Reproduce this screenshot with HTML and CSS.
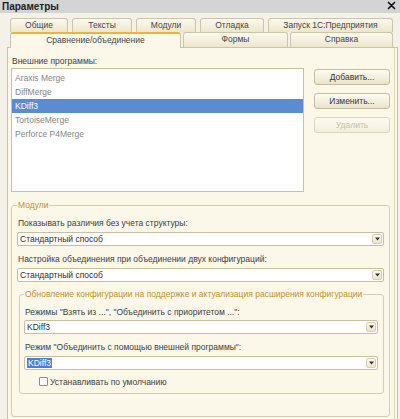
FILE: index.html
```html
<!DOCTYPE html>
<html lang="ru">
<head>
<meta charset="utf-8">
<title>Параметры</title>
<link rel="stylesheet" href="styles.css">
</head>
<body>
<div class="window">
  <div class="titlebar">
    <span class="title">Параметры</span>
    <svg class="close" width="9" height="9" viewBox="0 0 9 9"><path d="M1.5 1.5 L7.5 7.5 M7.5 1.5 L1.5 7.5" stroke="#111" stroke-width="1.7" stroke-linecap="round"/></svg>
  </div>
  <div class="tabs">
    <div class="tabrow back">
      <div class="tab t-common">Общие</div>
      <div class="tab t-texts">Тексты</div>
      <div class="tab t-modules">Модули</div>
      <div class="tab t-debug">Отладка</div>
      <div class="tab t-launch">Запуск 1С:Предприятия</div>
    </div>
    <div class="tabrow front">
      <div class="tab active t-compare">Сравнение/объединение</div>
      <div class="tab t-forms">Формы</div>
      <div class="tab t-help">Справка</div>
    </div>
  </div>
  <div class="panel">
    <div class="label">Внешние программы:</div>
    <div class="programs">
      <div class="list">
        <div class="item">Araxis Merge</div>
        <div class="item">DiffMerge</div>
        <div class="item selected">KDiff3</div>
        <div class="item">TortoiseMerge</div>
        <div class="item">Perforce P4Merge</div>
      </div>
      <div class="buttons">
        <div class="btn">Добавить...</div>
        <div class="btn">Изменить...</div>
        <div class="btn disabled">Удалить</div>
      </div>
    </div>
    <fieldset class="group">
      <legend>Модули</legend>
      <div class="flabel first">Показывать различия без учета структуры:</div>
      <div class="combo">
        <span class="value">Стандартный способ</span>
        <span class="arrow"><svg width="5" height="4" viewBox="0 0 5 4"><polygon points="0,0.5 5,0.5 2.5,3.5" fill="#333"/></svg></span>
      </div>
      <div class="flabel">Настройка объединения при объединении двух конфигураций:</div>
      <div class="combo">
        <span class="value">Стандартный способ</span>
        <span class="arrow"><svg width="5" height="4" viewBox="0 0 5 4"><polygon points="0,0.5 5,0.5 2.5,3.5" fill="#333"/></svg></span>
      </div>
      <fieldset class="subgroup">
        <legend>Обновление конфигурации на поддержке и актуализация расширения конфигурации</legend>
        <div class="flabel first sub">Режимы "Взять из ...", "Объединить с приоритетом ...":</div>
        <div class="combo">
          <span class="value">KDiff3</span>
          <span class="arrow"><svg width="5" height="4" viewBox="0 0 5 4"><polygon points="0,0.5 5,0.5 2.5,3.5" fill="#333"/></svg></span>
        </div>
        <div class="flabel">Режим "Объединить с помощью внешней программы":</div>
        <div class="combo">
          <span class="value"><span class="hl">KDiff3</span></span>
          <span class="arrow"><svg width="5" height="4" viewBox="0 0 5 4"><polygon points="0,0.5 5,0.5 2.5,3.5" fill="#333"/></svg></span>
        </div>
        <div class="check">
          <span class="box"></span>
          <span class="clabel">Устанавливать по умолчанию</span>
        </div>
      </fieldset>
    </fieldset>
  </div>
</div>
</body>
</html>
```
FILE: styles.css
```css
html, body {
  margin: 0;
  padding: 0;
}
body {
  width: 400px;
  height: 419px;
  overflow: hidden;
  font-family: "Liberation Sans", Arial, sans-serif;
  font-size: 8.5px;
  color: #404040;
  background: #f3f1e8;
}
.window {
  width: 400px;
  height: 419px;
}
.titlebar {
  height: 13px;
  background: #d4d4d4;
  display: flex;
  justify-content: space-between;
  align-items: flex-start;
}
.title {
  font-weight: bold;
  font-size: 10px;
  line-height: 11px;
  padding: 1px 0 0 2px;
  color: #1e1e1e;
}
.close {
  margin: 1px 4px 0 0;
}
.tabs {
  padding-top: 5px;
}
.tabrow {
  display: flex;
  padding-left: 10px;
}
.tabrow.back {
  gap: 4px;
  height: 14px;
}
.tabrow.front {
  gap: 2px;
  height: 15px;
}
.tab {
  box-sizing: border-box;
  border: 1px solid #cdc5a5;
  border-bottom: none;
  border-radius: 3px 3px 0 0;
  background: linear-gradient(#fcf9ee, #ede6cd);
  text-align: center;
  color: #454545;
  white-space: nowrap;
}
.back .tab {
  height: 14px;
  line-height: 13px;
}
.front .tab {
  height: 15px;
  line-height: 13px;
}
.front .tab.active {
  height: 16px;
  margin-bottom: -1px;
  background: #fbf8ea;
  border-top: 2px solid #f0b23c;
  line-height: 12px;
  position: relative;
  z-index: 1;
}
.t-common { width: 58px; }
.t-texts { width: 60px; }
.t-modules { width: 60px; }
.t-debug { width: 64px; }
.t-launch { width: 125px; }
.t-compare { width: 171px; }
.t-forms { width: 105px; }
.t-help { width: 103px; }

.panel {
  margin-left: 7px;
  width: 391px;
  height: 374px;
  box-sizing: border-box;
  border: 1px solid #cbc3a3;
  box-shadow: inset -2px 0 0 #fbf8ea, inset -3px 0 0 #ddd5b9;
  background: #fbf8ea;
  padding: 8px 7px 0 3px;
}
.label {
  line-height: 11px;
  padding-left: 1px;
}
.programs {
  display: flex;
  gap: 10px;
  margin-top: 1px;
}
.list {
  flex: 1;
  height: 124px;
  box-sizing: border-box;
  border: 1px solid #c9c1a1;
  background: #fff;
  padding-top: 2px;
}
.item {
  height: 14px;
  line-height: 14px;
  padding-left: 3px;
  color: #858585;
}
.item.selected {
  background: #5b8bd1;
  color: #fff;
}
.buttons {
  width: 76px;
  display: flex;
  flex-direction: column;
  gap: 8px;
  padding-top: 1px;
}
.btn {
  height: 16px;
  box-sizing: border-box;
  border: 1px solid #c6bd9c;
  border-radius: 3px;
  background: linear-gradient(#fefcf4, #ebe3c8);
  text-align: center;
  line-height: 14px;
  color: #353535;
}
.btn.disabled {
  color: #c8c0a4;
  border-color: #ddd6bb;
  background: linear-gradient(#fdfbf3, #f3eedc);
}
fieldset {
  margin: 0;
  min-width: 0;
}
legend {
  padding: 0 1px;
  line-height: 11px;
  color: #c48f2b;
}
.group {
  margin-top: 8px;
  padding: 0 5px 22px 5px;
  border: 1px solid #d5cdb0;
  border-radius: 3px;
}
.subgroup {
  margin: 7px 0 0 2px;
  padding: 0 5px 5px 4px;
  border: 1px solid #d5cdb0;
  border-radius: 3px;
}
.flabel {
  line-height: 12px;
  margin-top: 7px;
  margin-bottom: 3px;
  padding-left: 1px;
  white-space: nowrap;
}
.flabel.first {
  margin-top: 6px;
}
.flabel.sub {
  margin-top: 5.5px;
  margin-bottom: 2px;
}
.combo {
  height: 14px;
  box-sizing: border-box;
  border: 1px solid #c7bf9f;
  border-radius: 2px;
  background: #fff;
  display: flex;
  align-items: center;
}
.value {
  flex: 1;
  padding-left: 2px;
  color: #2e2e2e;
  line-height: 12px;
}
.hl {
  background: #4f7fd2;
  color: #fff;
  padding: 0 1px;
}
.arrow {
  width: 10px;
  height: 10px;
  margin-right: 1px;
  box-sizing: border-box;
  border: 1px solid #d8cfae;
  border-radius: 2px;
  background: linear-gradient(#fdfaef, #ece4c9);
  display: flex;
  align-items: center;
  justify-content: center;
}
.check {
  display: flex;
  align-items: center;
  gap: 2px;
  height: 12px;
  margin-top: 6px;
  padding-left: 15px;
}
.box {
  width: 9px;
  height: 9px;
  box-sizing: border-box;
  border: 1px solid #8a8a8a;
  border-radius: 1px;
  background: #fff;
}
.clabel {
  line-height: 12px;
}
```
